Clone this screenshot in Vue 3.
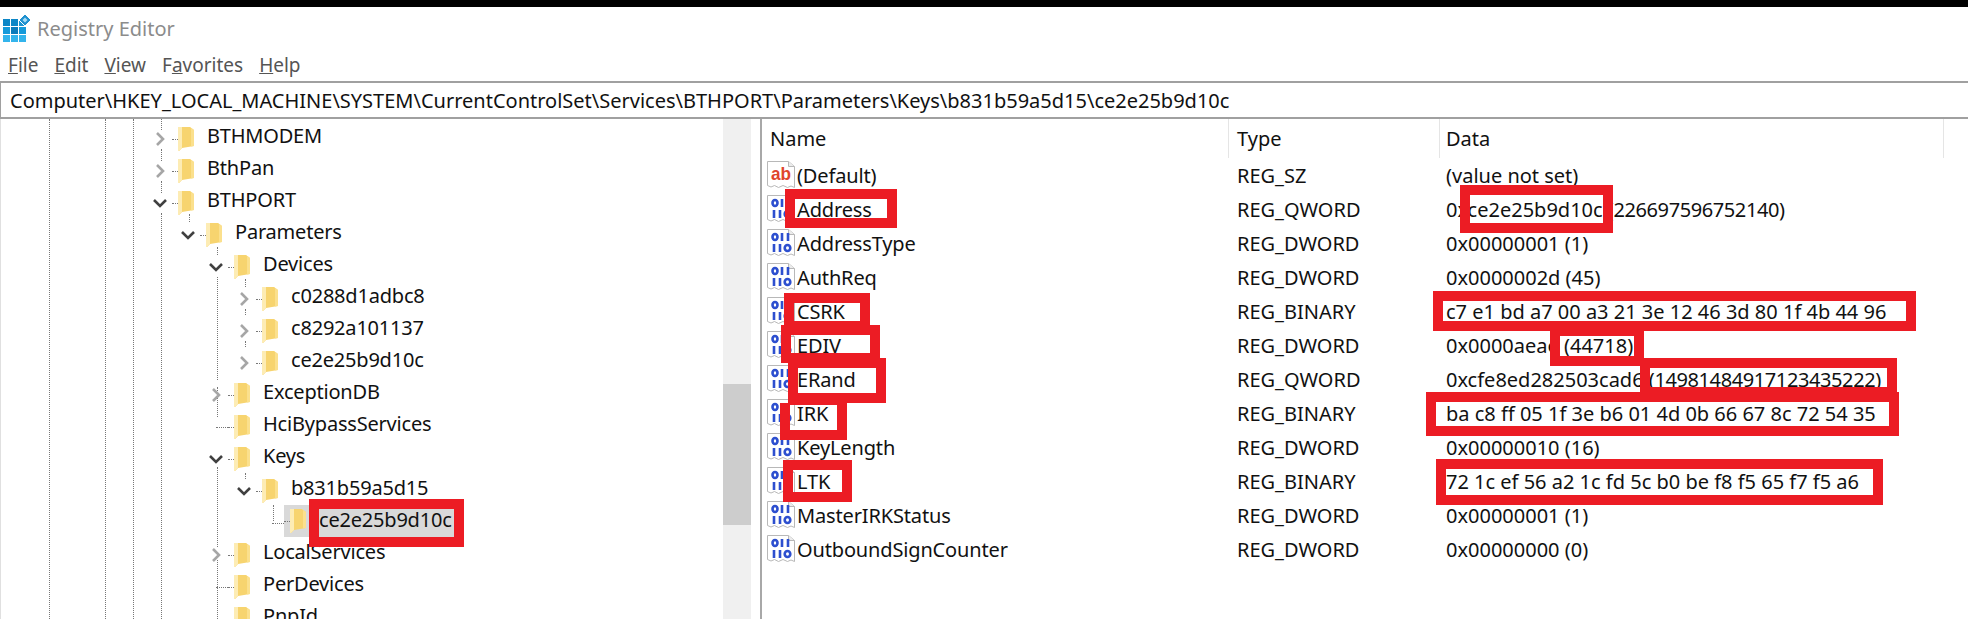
<script setup>
const menus = [
  { pre: '', key: 'F', post: 'ile' },
  { pre: '', key: 'E', post: 'dit' },
  { pre: '', key: 'V', post: 'iew' },
  { pre: 'F', key: 'a', post: 'vorites' },
  { pre: '', key: 'H', post: 'elp' }
]
const nodes = [
  { name: 'BTHMODEM', d: 0, e: 'c' },
  { name: 'BthPan', d: 0, e: 'c' },
  { name: 'BTHPORT', d: 0, e: 'o' },
  { name: 'Parameters', d: 1, e: 'o' },
  { name: 'Devices', d: 2, e: 'o' },
  { name: 'c0288d1adbc8', d: 3, e: 'c' },
  { name: 'c8292a101137', d: 3, e: 'c' },
  { name: 'ce2e25b9d10c', d: 3, e: 'c' },
  { name: 'ExceptionDB', d: 2, e: 'c' },
  { name: 'HciBypassServices', d: 2, e: '' },
  { name: 'Keys', d: 2, e: 'o' },
  { name: 'b831b59a5d15', d: 3, e: 'o' },
  { name: 'ce2e25b9d10c', d: 4, e: '', sel: true },
  { name: 'LocalServices', d: 2, e: 'c' },
  { name: 'PerDevices', d: 2, e: '' },
  { name: 'PnpId', d: 2, e: '' }
]
const guides = [
  [48, 0, 502], [104, 0, 502], [132, 0, 502],
  [160, 0, 11], [160, 30, 12], [160, 62, 12], [160, 94, 408],
  [188, 95, 8],
  [216, 128, 8], [216, 158, 103], [216, 268, 30], [216, 348, 80], [216, 441, 61],
  [244, 160, 8], [244, 190, 6], [244, 222, 6], [244, 354, 6],
  [272, 386, 16]
]
const regs = [
  { name: '(Default)', type: 'REG_SZ', data: '(value not set)', kind: 'sz' },
  { name: 'Address', type: 'REG_QWORD', data: '0xce2e25b9d10c ', tail: '(226697596752140)' },
  { name: 'AddressType', type: 'REG_DWORD', data: '0x00000001 (1)' },
  { name: 'AuthReq', type: 'REG_DWORD', data: '0x0000002d (45)' },
  { name: 'CSRK', type: 'REG_BINARY', data: 'c7 e1 bd a7 00 a3 21 3e 12 46 3d 80 1f 4b 44 96' },
  { name: 'EDIV', type: 'REG_DWORD', data: '0x0000aeae (44718)' },
  { name: 'ERand', type: 'REG_QWORD', data: '0xcfe8ed282503cad6 ', tail: '(14981484917123435222)' },
  { name: 'IRK', type: 'REG_BINARY', data: 'ba c8 ff 05 1f 3e b6 01 4d 0b 66 67 8c 72 54 35' },
  { name: 'KeyLength', type: 'REG_DWORD', data: '0x00000010 (16)' },
  { name: 'LTK', type: 'REG_BINARY', data: '72 1c ef 56 a2 1c fd 5c b0 be f8 f5 65 f7 f5 a6' },
  { name: 'MasterIRKStatus', type: 'REG_DWORD', data: '0x00000001 (1)' },
  { name: 'OutboundSignCounter', type: 'REG_DWORD', data: '0x00000000 (0)' }
]
// Red annotation rectangles painted over the screenshot: x, y, outer w, outer h, top border
const marks = [
  [309, 499, 155, 48, 10],
  [785, 189, 112, 39, 10],
  [784, 293, 86, 38, 10],
  [781, 325, 99, 38, 10],
  [788, 358, 98, 45, 10],
  [780, 403, 67, 37, 2],
  [783, 460, 69, 42, 10],
  [1460, 185, 153, 48, 10],
  [1433, 291, 483, 40, 10],
  [1550, 331, 94, 35, 5],
  [1640, 358, 257, 39, 10],
  [1426, 392, 473, 44, 10],
  [1436, 459, 447, 46, 10]
]
const markStyle = (m) => ({
  left: m[0] + 'px',
  top: m[1] + 'px',
  width: m[2] + 'px',
  height: m[3] + 'px',
  borderTopWidth: m[4] + 'px'
})
const guideStyle = (g) => ({ left: g[0] + 'px', top: g[1] + 'px', height: g[2] + 'px' })
</script>

<template>
  <div class="app">
    <div class="blackbar"></div>
    <header class="titlebar">
      <svg class="logo" width="28" height="28" viewBox="0 0 28 28">
        <rect x="0" y="5" width="7" height="7" fill="#0c86c6" />
        <rect x="8" y="5" width="7" height="7" fill="#0c86c6" />
        <rect x="16" y="5" width="7" height="7" fill="#1a95d2" />
        <rect x="0" y="13" width="7" height="7" fill="#159ada" />
        <rect x="8" y="13" width="7" height="7" fill="#0b7cbc" />
        <rect x="16" y="13" width="7" height="7" fill="#159ada" />
        <rect x="0" y="21" width="7" height="7" fill="#33b4ec" />
        <rect x="8" y="21" width="7" height="7" fill="#33b4ec" />
        <rect x="16" y="21" width="7" height="7" fill="#33b4ec" />
        <path d="M22 0l6 6-6 6-6-6z" fill="#1e90cf" stroke="#fff" stroke-width="1" />
        <path d="M22 3.500l2.500 2.500-2.500 2.500-2.500-2.500z" fill="#a8dcf5" />
      </svg>
      <span class="title">Registry Editor</span>
    </header>
    <nav class="menubar">
      <span v-for="m in menus" :key="m.key" class="menu">{{ m.pre }}<u>{{ m.key }}</u>{{ m.post }}</span>
    </nav>
    <div class="address">Computer\HKEY_LOCAL_MACHINE\SYSTEM\CurrentControlSet\Services\BTHPORT\Parameters\Keys\b831b59a5d15\ce2e25b9d10c</div>
    <main class="panes">
      <section class="tree">
        <div class="treebody">
          <i v-for="(g, i) in guides" :key="i" class="guide" :style="guideStyle(g)"></i>
          <div
            v-for="(n, i) in nodes"
            :key="i"
            class="row"
            :class="'depth' + n.d"
          >
            <span class="slot" :class="{ leaf: !n.e }">
              <svg v-if="n.e === 'c'" width="12" height="16" viewBox="0 0 12 16"><path d="M3 2l6 6-6 6" fill="none" stroke="#a6a6a6" stroke-width="2.600" /></svg>
              <svg v-if="n.e === 'o'" width="16" height="12" viewBox="0 0 16 12"><path d="M2 3l6 6 6-6" fill="none" stroke="#404040" stroke-width="2.600" /></svg>
            </span>
            <span class="node" :class="{ sel: n.sel }">
              <i class="stub"></i>
              <svg class="folder" width="16" height="24" viewBox="0 0 16 24">
                <path d="M0 0h12l4 3v16l-12 2-3 3H0z" fill="#f7d46f" />
                <path d="M12 0l4 3v16l-3 .5V0z" fill="#fbe08d" />
                <path d="M0 0h4v21l-3 3H0z" fill="#fdecb4" />
              </svg>
              <span class="label">{{ n.name }}</span>
            </span>
          </div>
        </div>
        <div class="scrollbar"><div class="thumb"></div></div>
      </section>
      <section class="list">
        <div class="listhead">
          <span class="cell c-name">Name</span>
          <span class="cell c-type">Type</span>
          <span class="cell c-data">Data</span>
        </div>
        <div v-for="r in regs" :key="r.name" class="lrow">
          <span class="c-name namecell">
            <svg class="regicon" width="28" height="28" viewBox="0 0 28 28">
              <path d="M.5 .5h21l6 5v21l-3.500-1.500-3.500 1.500-4.500-2-4.500 2-4-2-3.500 1.500-3.500-1.500z" fill="#fff" stroke="#b8b8b8" stroke-width="1" />
              <path d="M21.500 .5v5h6" fill="#ececec" stroke="#b8b8b8" stroke-width="1" />
              <text v-if="r.kind" x="4" y="19" class="abtext" textLength="20" lengthAdjust="spacingAndGlyphs">ab</text>
              <g v-else fill="none" stroke="#2d4fcf" stroke-width="2.600">
                <ellipse cx="8" cy="8" rx="2.500" ry="3" />
                <path d="M15 4v8M21 4v8" />
                <path d="M7 15v8M13 15v8" />
                <ellipse cx="20.500" cy="19" rx="2.800" ry="3" />
              </g>
            </svg>
            <span class="nametext">{{ r.name }}</span>
          </span>
          <span class="c-type">{{ r.type }}</span>
          <span class="c-data">{{ r.data }}<span v-if="r.tail" class="tail">{{ r.tail }}</span></span>
        </div>
      </section>
    </main>
    <i v-for="(m, i) in marks" :key="'m' + i" class="mark" :style="markStyle(m)"></i>
  </div>
</template>

<style>
html, body { margin: 0; background: #fff; }
</style>

<style scoped>
.app {
  position: relative;
  height: 619px;
  width: 1968px;
  overflow: hidden;
  display: flex;
  flex-direction: column;
  background: #fff;
  color: #111;
  font-family: "Noto Sans", "Open Sans", sans-serif;
  font-size: 20px;
}
.blackbar { height: 7px; background: #000; flex: none; }
.titlebar { height: 43px; flex: none; display: flex; align-items: center; padding-left: 3px; gap: 6px; }
.logo { margin-bottom: 1px; flex: none; }
.title { color: #8c8c8c; font-size: 20px; }
.menubar { height: 31px; flex: none; box-sizing: border-box; padding: 0 0 2px 8px; display: flex; align-items: center; gap: 16px; color: #555; font-size: 19px; }
.address {
  height: 34px;
  flex: none;
  display: flex;
  align-items: center;
  padding-left: 9px;
  border: 1px solid #a0a0a0;
  border-width: 2px 0 2px 1px;
  color: #111;
  font-size: 20px;
  white-space: nowrap;
}
.panes { flex: 1; display: flex; min-height: 0; }
.tree { flex: none; display: flex; border-left: 1px solid #e0e0e0; box-sizing: border-box; border-right: 2px solid #a8a8a8; width: 762px; }
.treebody { position: relative; flex: 1; padding-top: 4px; overflow: hidden; }
.guide { position: absolute; width: 0; border-left: 1px dotted #777; }
.row { display: flex; height: 32px; align-items: center; white-space: nowrap; position: relative; }
.depth0 { padding-left: 147px; }
.depth1 { padding-left: 175px; }
.depth2 { padding-left: 203px; }
.depth3 { padding-left: 231px; }
.depth4 { padding-left: 259px; }
.slot { width: 24px; height: 32px; flex: none; display: flex; align-items: center; justify-content: center; position: relative; }
.slot.leaf::after { content: ""; position: absolute; left: 12px; right: 0; top: 50%; border-top: 1px dotted #777; }
.node { display: flex; align-items: center; height: 32px; }
.node.sel { background: #d9d9d9; margin-top: -4px; padding-right: 6px; }
.stub { width: 6px; flex: none; border-top: 1px dotted #777; }
.folder { flex: none; margin-right: 13px; }
.label { color: #111; padding-bottom: 6px; line-height: 26px; letter-spacing: -0.2px; }
.node.sel .label { padding-bottom: 2px; }
.scrollbar { width: 28px; flex: none; margin-right: 9px; background: #f0f0f0; }
.thumb { margin-top: 265px; height: 141px; background: #cdcdcd; }
.list { flex: 1; min-width: 0; }
.listhead { height: 39px; display: flex; align-items: center; width: 1182px; }
.cell { height: 39px; display: flex; align-items: center; border-right: 1px solid #e5e5e5; box-sizing: border-box; }
.c-name { width: 467px; flex: none; padding-left: 8px; box-sizing: border-box; }
.c-type { width: 211px; flex: none; padding-left: 8px; box-sizing: border-box; }
.c-data { flex: 1; padding-left: 6px; }
.lrow { height: 34px; display: flex; align-items: center; white-space: nowrap; }
.namecell { display: flex; align-items: center; padding-left: 5px; gap: 2px; }
.nametext { letter-spacing: -0.15px; }
.tail { letter-spacing: -0.4px; }
.regicon { flex: none; }
.abtext { font-family: "Liberation Sans", sans-serif; font-size: 19px; font-weight: 700; fill: #e0452c; }
.mark { position: absolute; box-sizing: border-box; border: 10px solid #ec1c24; }
</style>
